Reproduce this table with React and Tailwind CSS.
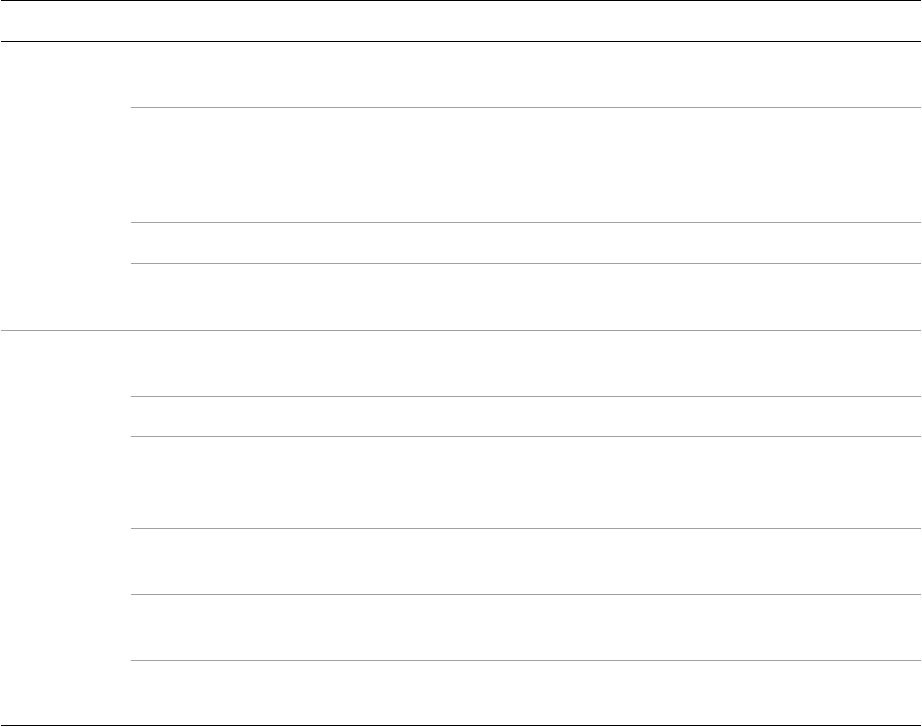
export default function App() {
  const group1 = [66, 115, 41, 66];
  const group2 = [66, 40, 92, 66, 66, 64];
  const Group = ({ rows, last }) => (
    <div className={last ? "flex" : "flex border-b border-[#a0a0a0]"}>
      <div className="w-[130px] shrink-0" />
      <div className="flex flex-1 flex-col">
        {rows.map((h, i) => (
          <div
            key={i}
            className={i < rows.length - 1 ? "border-b border-[#a0a0a0]" : ""}
            style={{ height: h }}
          />
        ))}
      </div>
    </div>
  );
  return (
    <div className="min-h-[727px] bg-white font-['Liberation_Sans',sans-serif]">
      <div className="ml-px w-[920px] border-y border-black">
        <div className="h-[41px] border-b border-black" />
        <Group rows={group1} />
        <Group rows={group2} last />
      </div>
    </div>
  );
}
